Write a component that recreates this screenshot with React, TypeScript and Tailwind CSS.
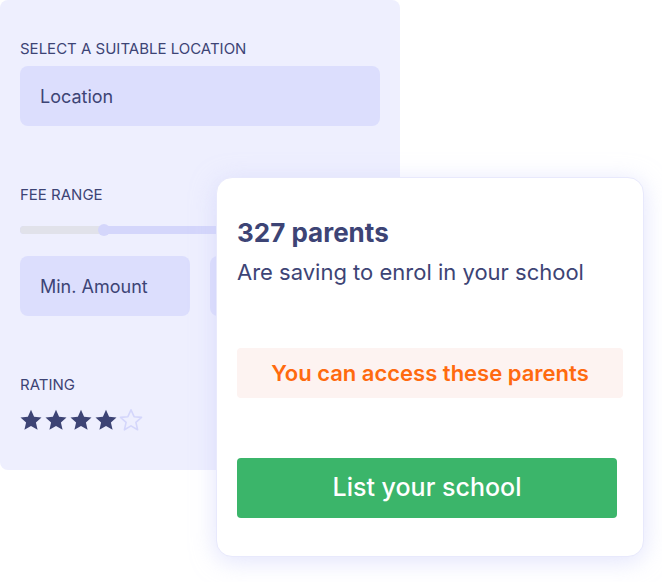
import React from "react";

const ink = "text-[#3d4475]";

function Star({ filled }: { filled: boolean }) {
	return (
		<svg width="24" height="24" viewBox="0 0 24 24">
			<path
				d="M12 1.8l3.1 6.9 7.4.7-5.6 5 1.7 7.4L12 17.9l-6.6 3.9 1.7-7.4-5.6-5 7.4-.7z"
				fill={filled ? "#3d4475" : "none"}
				stroke={filled ? "none" : "#d4d6fb"}
				strokeWidth="1.6"
				strokeLinejoin="round"
			/>
		</svg>
	);
}

function Field({ label }: { label?: string }) {
	return (
		<div className={`h-[60px] rounded-lg bg-[#dcdefd] flex items-center px-5 text-[18px] ${ink}`}>
			{label}
		</div>
	);
}

export default function App() {
	return (
		<div
			className="relative w-[662px] h-[582px] bg-white"
			style={{ fontFamily: "Inter, 'Open Sans', sans-serif" }}
		>
			<div className="w-[400px] h-[470px] rounded-lg bg-[#eeeffe] px-5 pt-[41px]">
				<p className={`text-[15px] leading-4 uppercase ${ink}`}>Select a suitable location</p>
				<div className="mt-[9px]">
					<Field label="Location" />
				</div>

				<p className={`mt-[61px] text-[15px] leading-4 uppercase ${ink}`}>Fee range</p>
				<div className="relative mt-[23px] h-2 rounded-full bg-[#d4d6fb] flex">
					<div className="w-[84px] h-2 rounded-l-full bg-[#e1e2ea]" />
					<div className="absolute left-[78px] top-[-2px] w-3 h-3 rounded-full bg-[#d4d6fb]" />
				</div>
				<div className="mt-[22px] grid grid-cols-2 gap-5">
					<Field label="Min. Amount" />
					{/* max amount box sits under the card */}
					<Field />
				</div>

				<p className={`mt-[61px] text-[15px] leading-4 uppercase ${ink}`}>Rating</p>
				<div className="mt-[15px] flex gap-[1px] -ml-[1px]">
					<Star filled />
					<Star filled />
					<Star filled />
					<Star filled />
					<Star filled={false} />
				</div>
			</div>

			<div className="absolute left-[216px] top-[177px] w-[428px] h-[380px] rounded-2xl bg-white border border-[#e8e9fc] shadow-[0_4px_24px_rgba(205,208,250,0.6)] px-5 pt-[40px]">
				<p className={`text-[26px] leading-[30px] font-bold ${ink}`}>327 parents</p>
				<p className={`mt-[10px] text-[22px] leading-[28px] ${ink}`}>Are saving to enrol in your school</p>
				<div className="mt-[62px] h-[50px] rounded bg-[#fdf3f1] flex items-center justify-center text-[22px] font-semibold text-[#ff6a0f]">
					You can access these parents
				</div>
				<button className="mt-[60px] w-[380px] h-[60px] rounded bg-[#3bb56a] text-white text-[25px] font-medium">
					List your school
				</button>
			</div>
		</div>
	);
}
